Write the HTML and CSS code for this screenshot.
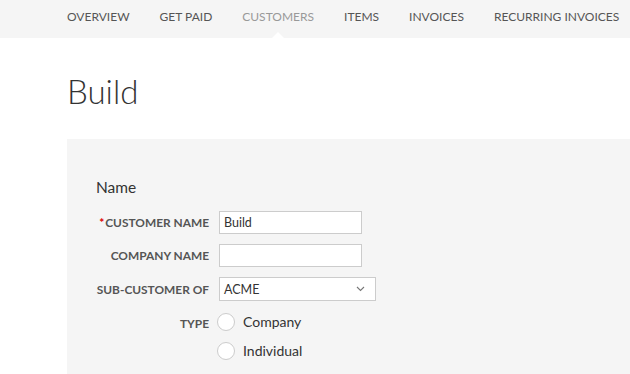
FILE: index.html
```html
<!DOCTYPE html>
<html>
<head>
<meta charset="utf-8">
<link rel="stylesheet" href="styles.css">
</head>
<body>
<nav class="topnav">
  <a class="nav-item">OVERVIEW</a>
  <a class="nav-item">GET PAID</a>
  <a class="nav-item active">CUSTOMERS</a>
  <a class="nav-item">ITEMS</a>
  <a class="nav-item">INVOICES</a>
  <a class="nav-item">RECURRING INVOICES</a>
</nav>
<main class="main">
  <h1 class="title">Build</h1>
  <section class="panel">
    <h2 class="section-title">Name</h2>
    <div class="form">
      <label class="label"><span class="req">*</span>CUSTOMER NAME</label>
      <div class="field"><input class="input" type="text" value="Build"></div>
      <label class="label">COMPANY NAME</label>
      <div class="field"><input class="input" type="text" value=""></div>
      <label class="label">SUB-CUSTOMER OF</label>
      <div class="field">
        <div class="select">
          <span>ACME</span>
          <svg class="chev" width="9" height="6" viewBox="0 0 9 6"><path d="M1 1 L4.5 4.5 L8 1" fill="none" stroke="#777" stroke-width="1.1"/></svg>
        </div>
      </div>
      <label class="label type-label">TYPE</label>
      <div class="field radios">
        <div class="radio-row"><span class="radio"></span><span class="radio-text">Company</span></div>
        <div class="radio-row"><span class="radio"></span><span class="radio-text">Individual</span></div>
      </div>
    </div>
  </section>
</main>
</body>
</html>
```
FILE: styles.css
```css
html, body {
  margin: 0;
  padding: 0;
  background: #fff;
  font-family: Lato, "Open Sans", sans-serif;
  overflow: hidden;
}
.topnav {
  height: 38px;
  background: #f5f5f5;
  display: flex;
  align-items: center;
  gap: 30px;
  padding-left: 67px;
  box-sizing: border-box;
  position: relative;
}
.nav-item {
  font-size: 12px;
  color: #555;
  margin-top: -6px;
  position: relative;
}
.nav-item.active {
  color: #999;
}
.nav-item.active::after {
  content: "";
  position: absolute;
  left: 50%;
  margin-left: -8px;
  top: 23px;
  width: 0;
  height: 0;
  border-left: 8px solid transparent;
  border-right: 8px solid transparent;
  border-bottom: 8px solid #fff;
}
.main {
  padding-left: 67px;
}
.title {
  margin: 0;
  padding-top: 32px;
  height: 101px;
  box-sizing: border-box;
  font-size: 33px;
  font-weight: 300;
  color: #333;
  line-height: 1.3;
}
.panel {
  background: #f5f5f5;
  padding: 38px 0 20px 29px;
}
.section-title {
  margin: 0 0 14px 0;
  font-size: 15.5px;
  font-weight: 400;
  color: #333;
  line-height: 20px;
}
.form {
  display: grid;
  grid-template-columns: 113px auto;
  column-gap: 10px;
  row-gap: 10px;
  align-items: center;
}
.label {
  text-align: right;
  font-size: 11.9px;
  font-weight: 700;
  color: #555;
  white-space: nowrap;
}
.req {
  color: #d00;
  margin-right: 1px;
}
.field {
  display: flex;
}
.input {
  width: 143px;
  height: 23px;
  box-sizing: border-box;
  border: 1px solid #ccc;
  background: #fff;
  padding: 0 4px;
  font-family: Lato, sans-serif;
  font-size: 12.5px;
  color: #333;
  margin: 0;
  outline: none;
}
.select {
  width: 157px;
  height: 24px;
  box-sizing: border-box;
  border: 1px solid #ccc;
  background: #fff;
  padding: 0 10px 0 4px;
  display: flex;
  align-items: center;
  justify-content: space-between;
  font-size: 12.5px;
  color: #333;
}
.type-label {
  align-self: start;
  margin-top: 5px;
}
.radios {
  flex-direction: column;
  gap: 10px;
  margin-left: -2px;
  margin-top: 1px;
}
.radio-row {
  display: flex;
  align-items: center;
  gap: 8px;
  height: 19px;
}
.radio {
  width: 16px;
  height: 16px;
  border: 1px solid #ccc;
  border-radius: 50%;
  background: #fff;
}
.radio-text {
  font-size: 14px;
  color: #333;
}
```
